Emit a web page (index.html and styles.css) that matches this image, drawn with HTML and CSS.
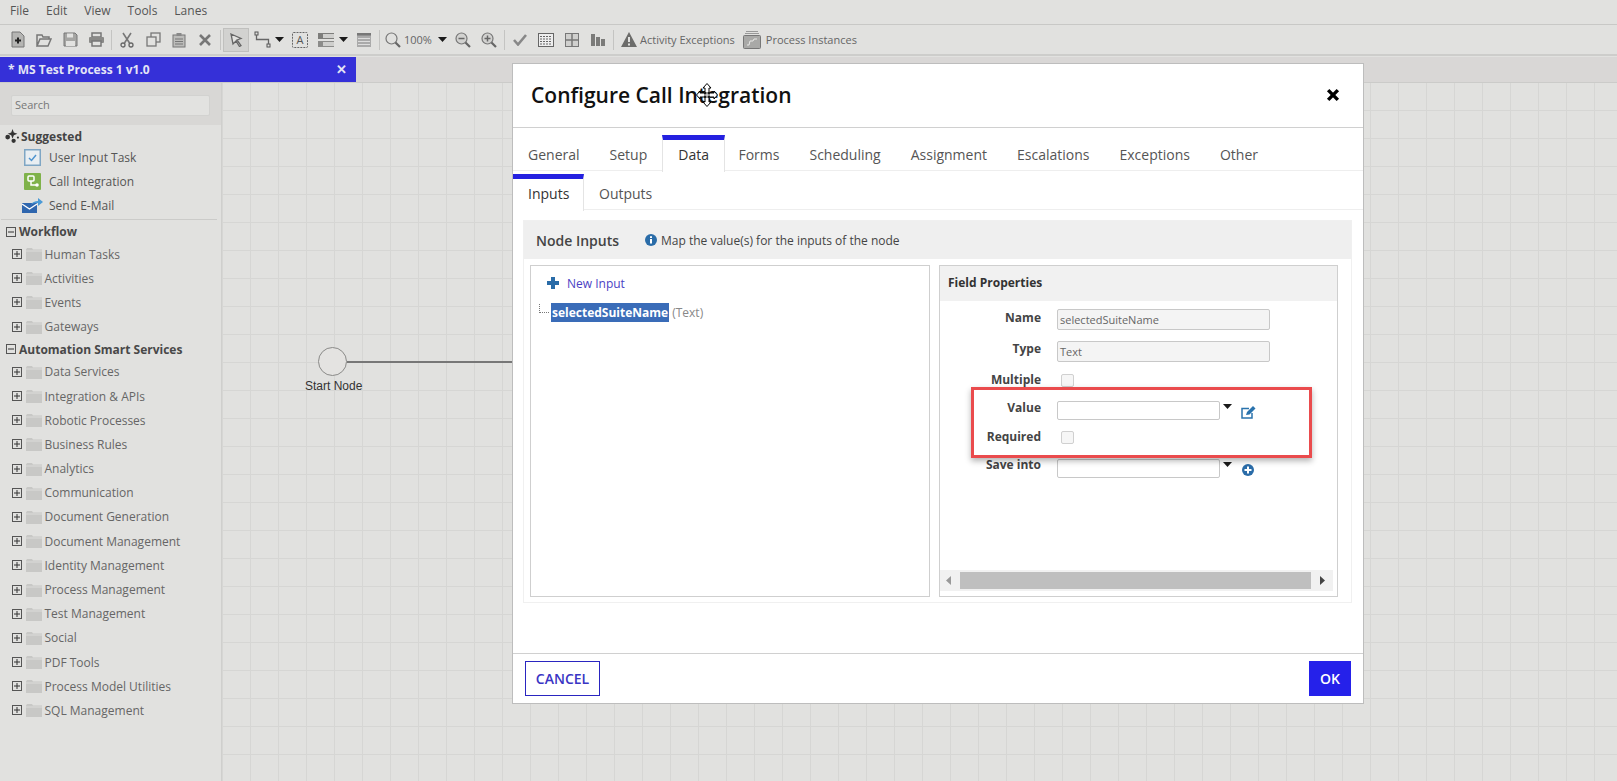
FILE: index.html
```html
<!DOCTYPE html>
<html lang="en">
<head>
<meta charset="utf-8">
<title>Configure Call Integration</title>
<link rel="stylesheet" href="styles.css">
</head>
<body>
<svg class="defs" width="0" height="0" aria-hidden="true">
  <symbol id="folder" viewBox="0 0 16 14"><path d="M0 2.500 1 1h5l1 1.500h9V14H0z" fill="#c8c8c6"/><path d="M0 4h16" stroke="#dcdcda"/></symbol>
  <symbol id="plus" viewBox="0 0 10 10"><rect x=".5" y=".5" width="9" height="9" fill="none" stroke="#555"/><path d="M2 5h6M5 2v6" stroke="#333"/></symbol>
  <symbol id="minus" viewBox="0 0 10 10"><rect x=".5" y=".5" width="9" height="9" fill="none" stroke="#555"/><path d="M2 5h6" stroke="#333"/></symbol>
  <symbol id="caret" viewBox="0 0 9 5"><path d="M0 0h9L4.500 5z" fill="#1a1a1a"/></symbol>
</svg>

<nav class="menubar"><span>File</span><span>Edit</span><span>View</span><span>Tools</span><span>Lanes</span></nav>

<div class="toolbar">
  <span class="cell"><svg width="14" height="17" viewBox="0 0 14 17"><path d="M1 1h8l4 4v11H1z" fill="#b5b5b3" stroke="#777"/><path d="M4 9.500h6M7 6.500v6" stroke="#222" stroke-width="2"/></svg></span>
  <span class="cell"><svg width="16" height="14" viewBox="0 0 16 14"><path d="M1 13V2h5l1 2h6v2M1 13l3-7h11l-3 7z" fill="none" stroke="#777" stroke-width="1.500"/></svg></span>
  <span class="cell"><svg width="15" height="15" viewBox="0 0 15 15"><path d="M1 1h11l2 2v11H1z" fill="#a5a5a3" stroke="#777"/><rect x="4" y="1.500" width="6" height="4" fill="#e2e2e0"/><rect x="3" y="9" width="9" height="5" fill="#e2e2e0"/></svg></span>
  <span class="cell"><svg width="17" height="15" viewBox="0 0 17 15"><rect x="4" y="1" width="9" height="4" fill="none" stroke="#777" stroke-width="1.500"/><rect x="1" y="5" width="15" height="6" rx="1" fill="#8a8a88"/><rect x="4" y="9" width="9" height="5" fill="#e2e2e0" stroke="#777" stroke-width="1.500"/></svg></span>
  <i class="sep"></i>
  <span class="cell"><svg width="14" height="16" viewBox="0 0 14 16"><path d="M3 1l6.500 10M11 1 4.500 11" stroke="#777" stroke-width="1.600" fill="none"/><circle cx="3" cy="13" r="2" fill="none" stroke="#666" stroke-width="1.300"/><circle cx="11" cy="13" r="2" fill="none" stroke="#666" stroke-width="1.300"/></svg></span>
  <span class="cell"><svg width="15" height="15" viewBox="0 0 15 15"><rect x="5" y="1" width="9" height="9" fill="none" stroke="#777" stroke-width="1.300"/><rect x="1" y="5" width="9" height="9" fill="#e2e2e0" stroke="#777" stroke-width="1.300"/></svg></span>
  <span class="cell"><svg width="14" height="16" viewBox="0 0 14 16"><rect x="1" y="3" width="12" height="12" fill="#bcbcba" stroke="#777"/><rect x="4.500" y="1" width="5" height="3" fill="#888"/><path d="M3 7h8M3 9.500h8M3 12h8" stroke="#777"/></svg></span>
  <span class="cell"><svg width="14" height="14" viewBox="0 0 14 14"><path d="M2 2l10 10M12 2 2 12" stroke="#777" stroke-width="2.600"/></svg></span>
  <i class="sep"></i>
  <span class="cell active"><svg width="13" height="14" viewBox="0 0 13 14"><path d="M1 1l10 4.500-4 1.500 4 5.500-1.500 1-3.500-5.500L3 11z" fill="#e2e2e0" stroke="#666" stroke-width="1.300"/></svg></span>
  <span class="cell"><svg width="17" height="17" viewBox="0 0 17 17"><rect x="1" y="1" width="3" height="3" fill="none" stroke="#555"/><rect x="13" y="13" width="3" height="3" fill="none" stroke="#555"/><path d="M2.500 4v4.500h12V13" fill="none" stroke="#666" stroke-width="1.300"/></svg></span>
  <svg class="caret" width="9" height="5"><use href="#caret"/></svg>
  <span class="cell cell-after-caret"><svg width="16" height="16" viewBox="0 0 16 16"><rect x=".5" y=".5" width="15" height="15" rx="1" fill="none" stroke="#666" stroke-dasharray="2 1"/><text x="8" y="12" class="svg-a">A</text></svg></span>
  <span class="cell"><svg width="16" height="14" viewBox="0 0 16 14"><rect width="16" height="6" fill="#7d7d7b"/><rect y="8" width="16" height="6" fill="#8c8c8a"/><rect x="5" y="1" width="11" height="4" fill="#cfcfcd"/><rect x="5" y="9" width="11" height="4" fill="#cfcfcd"/></svg></span>
  <svg class="caret" width="9" height="5"><use href="#caret"/></svg>
  <span class="cell cell-after-caret"><svg width="14" height="14" viewBox="0 0 14 14"><rect width="14" height="14" fill="#aaa"/><rect width="14" height="2.500" fill="#777"/><path d="M1 5.500h12M1 8.500h12M1 11.500h12" stroke="#ddd"/></svg></span>
  <i class="sep sep-tight"></i>
  <span class="cell"><svg width="16" height="16" viewBox="0 0 16 16"><circle cx="6.500" cy="6.500" r="5.500" fill="none" stroke="#777" stroke-width="1.200"/><path d="M10.500 10.500 15 15" stroke="#666" stroke-width="2.200"/></svg></span>
  <span class="zoom-val">100%</span>
  <svg class="caret" width="9" height="5"><use href="#caret"/></svg>
  <span class="cell cell-zoomout"><svg width="16" height="16" viewBox="0 0 16 16"><circle cx="6.500" cy="6.500" r="5.500" fill="#d2d2d0" stroke="#777" stroke-width="1.200"/><path d="M10.500 10.500 15 15" stroke="#666" stroke-width="2.200"/><path d="M3.500 6.500h6" stroke="#666" stroke-width="1.500"/></svg></span>
  <span class="cell"><svg width="16" height="16" viewBox="0 0 16 16"><circle cx="6.500" cy="6.500" r="5.500" fill="#d2d2d0" stroke="#777" stroke-width="1.200"/><path d="M10.500 10.500 15 15" stroke="#666" stroke-width="2.200"/><path d="M3.500 6.500h6M6.500 3.500v6" stroke="#666" stroke-width="1.500"/></svg></span>
  <i class="sep"></i>
  <span class="cell"><svg width="14" height="12" viewBox="0 0 14 12"><path d="M1 6l4 4.500L13 1" fill="none" stroke="#888" stroke-width="2.600"/></svg></span>
  <span class="cell"><svg width="16" height="14" viewBox="0 0 16 14"><rect x=".5" y=".5" width="15" height="13" fill="#eee" stroke="#666"/><path d="M2 3.500h12M2 6h12M2 8.500h12M2 11h12" stroke="#666" stroke-dasharray="2 1"/></svg></span>
  <span class="cell"><svg width="14" height="14" viewBox="0 0 14 14"><rect x=".5" y=".5" width="13" height="13" fill="#d0d0ce" stroke="#777"/><path d="M7 0v14M0 7h14" stroke="#777" stroke-width="1.500"/></svg></span>
  <span class="cell"><svg width="14" height="12" viewBox="0 0 14 12"><path d="M0 0h4v12H0zM5 3h4v9H5zM10 5h4v7h-4z" fill="#7b7b79"/></svg></span>
  <i class="sep"></i>
  <span class="labelled"><svg width="16" height="15" viewBox="0 0 16 15"><path d="M8 0 16 15H0z" fill="#6c6c6a"/><path d="M8 5v5M8 11.500v2" stroke="#e2e2e0" stroke-width="2"/></svg><span>Activity Exceptions</span></span>
  <span class="labelled labelled-second"><svg width="18" height="18" viewBox="0 0 18 18"><path d="M3 .5h12M2 2.500h14" stroke="#999"/><rect x=".5" y="4.500" width="17" height="13" rx="1" fill="#a9a9a7" stroke="#777"/><path d="M4 14h2l1-4h3l1-2h3" fill="none" stroke="#e8e8e6"/></svg><span>Process Instances</span></span>
</div>

<div class="tabstrip">
  <div class="doc-tab"><span>* MS Test Process 1 v1.0</span><span class="doc-x">✕</span></div>
</div>

<div class="workspace">
  <aside class="sidebar">
    <div class="search-wrap"><input class="search" placeholder="Search" aria-label="Search"></div>
    <div class="suggested-h">
      <svg width="14" height="14" viewBox="0 0 13 13"><path d="M7 0l1.200 3.300L11.500 4.500 8.200 5.700 7 9 5.800 5.700 2.500 4.500 5.800 3.300z" fill="#333"/><circle cx="2.500" cy="7.500" r="2.200" fill="#333"/><circle cx="8" cy="11" r="2" fill="#333"/><circle cx="12" cy="8" r="1" fill="#333"/></svg>
      <span>Suggested</span>
    </div>
    <div class="sug-item"><svg width="17" height="17" viewBox="0 0 17 17"><rect x=".75" y=".75" width="15.500" height="15.500" fill="#e9eef2" stroke="#7fa6c4" stroke-width="1.500"/><path d="M5 9l2.500 2.500L12 6" fill="none" stroke="#4f94cf" stroke-width="1.500"/></svg><span>User Input Task</span></div>
    <div class="sug-item"><svg width="17" height="17" viewBox="0 0 17 17"><rect width="17" height="17" rx="1" fill="#7fb24a"/><rect x="4" y="3" width="6" height="5" rx="1" fill="none" stroke="#fff" stroke-width="1.500"/><path d="M7 8v4h5" fill="none" stroke="#fff" stroke-width="1.500"/><circle cx="13" cy="12" r="1.800" fill="#fff"/></svg><span>Call Integration</span></div>
    <div class="sug-item"><svg width="21" height="15" viewBox="0 0 21 15"><rect y="5" width="15" height="10" fill="#2f66ae"/><path d="M0 6l7.500 5L15 6" fill="none" stroke="#fff" stroke-width="1.300"/><path d="M9 7c1-3 4-4 7-4V0l5 4-5 4V5c-3 0-5 0-7 2z" fill="#4b9ad6"/></svg><span>Send E-Mail</span></div>
    <hr class="side-rule">
    <div class="group"><svg width="10" height="10"><use href="#minus"/></svg><span>Workflow</span></div>
    <div class="node"><svg width="10" height="10"><use href="#plus"/></svg><svg width="16" height="14"><use href="#folder"/></svg><span>Human Tasks</span></div>
    <div class="node"><svg width="10" height="10"><use href="#plus"/></svg><svg width="16" height="14"><use href="#folder"/></svg><span>Activities</span></div>
    <div class="node"><svg width="10" height="10"><use href="#plus"/></svg><svg width="16" height="14"><use href="#folder"/></svg><span>Events</span></div>
    <div class="node"><svg width="10" height="10"><use href="#plus"/></svg><svg width="16" height="14"><use href="#folder"/></svg><span>Gateways</span></div>
    <div class="group"><svg width="10" height="10"><use href="#minus"/></svg><span>Automation Smart Services</span></div>
    <div class="node"><svg width="10" height="10"><use href="#plus"/></svg><svg width="16" height="14"><use href="#folder"/></svg><span>Data Services</span></div>
    <div class="node"><svg width="10" height="10"><use href="#plus"/></svg><svg width="16" height="14"><use href="#folder"/></svg><span>Integration &amp; APIs</span></div>
    <div class="node"><svg width="10" height="10"><use href="#plus"/></svg><svg width="16" height="14"><use href="#folder"/></svg><span>Robotic Processes</span></div>
    <div class="node"><svg width="10" height="10"><use href="#plus"/></svg><svg width="16" height="14"><use href="#folder"/></svg><span>Business Rules</span></div>
    <div class="node"><svg width="10" height="10"><use href="#plus"/></svg><svg width="16" height="14"><use href="#folder"/></svg><span>Analytics</span></div>
    <div class="node"><svg width="10" height="10"><use href="#plus"/></svg><svg width="16" height="14"><use href="#folder"/></svg><span>Communication</span></div>
    <div class="node"><svg width="10" height="10"><use href="#plus"/></svg><svg width="16" height="14"><use href="#folder"/></svg><span>Document Generation</span></div>
    <div class="node"><svg width="10" height="10"><use href="#plus"/></svg><svg width="16" height="14"><use href="#folder"/></svg><span>Document Management</span></div>
    <div class="node"><svg width="10" height="10"><use href="#plus"/></svg><svg width="16" height="14"><use href="#folder"/></svg><span>Identity Management</span></div>
    <div class="node"><svg width="10" height="10"><use href="#plus"/></svg><svg width="16" height="14"><use href="#folder"/></svg><span>Process Management</span></div>
    <div class="node"><svg width="10" height="10"><use href="#plus"/></svg><svg width="16" height="14"><use href="#folder"/></svg><span>Test Management</span></div>
    <div class="node"><svg width="10" height="10"><use href="#plus"/></svg><svg width="16" height="14"><use href="#folder"/></svg><span>Social</span></div>
    <div class="node"><svg width="10" height="10"><use href="#plus"/></svg><svg width="16" height="14"><use href="#folder"/></svg><span>PDF Tools</span></div>
    <div class="node"><svg width="10" height="10"><use href="#plus"/></svg><svg width="16" height="14"><use href="#folder"/></svg><span>Process Model Utilities</span></div>
    <div class="node"><svg width="10" height="10"><use href="#plus"/></svg><svg width="16" height="14"><use href="#folder"/></svg><span>SQL Management</span></div>
  </aside>
  <main class="canvas">
    <div class="start-circle"></div>
    <div class="start-line"></div>
    <div class="start-label">Start Node</div>
  </main>
</div>

<section class="modal" aria-label="Configure Call Integration">
  <header class="modal-head">
    <h1>Configure Call Integration</h1>
    <svg width="14" height="14" viewBox="0 0 13 13"><path d="M2 2l9 9M11 2l-9 9" stroke="#000" stroke-width="3.200"/></svg>
  </header>
  <div class="tabs">
    <span>General</span><span>Setup</span><span class="on">Data</span><span>Forms</span><span>Scheduling</span><span>Assignment</span><span>Escalations</span><span>Exceptions</span><span>Other</span>
  </div>
  <div class="tabs subtabs">
    <span class="on">Inputs</span><span>Outputs</span>
  </div>
  <div class="panel">
    <div class="panel-bar">
      <strong>Node Inputs</strong>
      <svg width="12" height="12" viewBox="0 0 12 12"><circle cx="6" cy="6" r="6" fill="#2a6ca8"/><path d="M6 5v4.500M6 2.300v1.700" stroke="#fff" stroke-width="2"/></svg>
      <span>Map the value(s) for the inputs of the node</span>
    </div>
    <div class="panes">
      <div class="pane pane-tree">
        <div class="new-input"><svg width="12" height="12" viewBox="0 0 12 12"><path d="M6 0v12M0 6h12" stroke="#2a6ca8" stroke-width="4"/></svg><span>New Input</span></div>
        <div class="tree-row"><i class="tree-elbow"></i><b>selectedSuiteName</b><span>(Text)</span></div>
      </div>
      <div class="pane pane-props">
        <div class="props-head">Field Properties</div>
        <div class="frow frow-name"><label>Name</label><div class="tf ro">selectedSuiteName</div></div>
        <div class="frow frow-type"><label>Type</label><div class="tf ro">Text</div></div>
        <div class="frow frow-multi"><label>Multiple</label><i class="chk"></i></div>
        <div class="frow frow-value"><label>Value</label><div class="tf sel"></div>
          <svg class="sel-caret" width="9" height="5"><use href="#caret"/></svg>
          <svg class="sel-act" width="15" height="13" viewBox="0 0 15 13"><path d="M11 7v5H1V2.500h7" fill="none" stroke="#2a73ad" stroke-width="1.500"/><path d="M5 9l1-3 6-6 2.500 2.500-6 6z" fill="#2a73ad"/></svg>
        </div>
        <div class="frow frow-req"><label>Required</label><i class="chk"></i></div>
        <div class="frow frow-save"><label>Save into</label><div class="tf sel"></div>
          <svg class="sel-caret" width="9" height="5"><use href="#caret"/></svg>
          <svg class="sel-act sel-plus" width="12" height="12" viewBox="0 0 12 12"><circle cx="6" cy="6" r="6" fill="#2a6ca8"/><path d="M2.500 6h7M6 2.500v7" stroke="#fff" stroke-width="2"/></svg>
        </div>
        <div class="hscroll">
          <svg width="5" height="9" viewBox="0 0 5 9"><path d="M5 0v9L0 4.500z" fill="#999"/></svg>
          <div class="thumb"></div>
          <svg width="5" height="9" viewBox="0 0 5 9"><path d="M0 0v9l5-4.500z" fill="#444"/></svg>
        </div>
      </div>
    </div>
  </div>
  <footer class="modal-foot">
    <button class="btn-cancel">CANCEL</button>
    <button class="btn-ok">OK</button>
  </footer>
</section>

<div class="highlight"></div>
<svg class="move-cursor" width="22" height="24" viewBox="0 0 22 24"><path d="M11 .5 15 5h-2v5h5V8l3.500 4-3.500 4v-2h-5v5h2l-4 4.500L7 19h2v-5H4v2L.5 12 4 8v2h5V5H7z" fill="#fff" stroke="#000"/><path d="M8 9h6v6H8z" fill="#1a1a1a"/><path d="M11 7v10M6 12h10" stroke="#fff"/></svg>
</body>
</html>
```
FILE: styles.css
```css
* { box-sizing: border-box; }
html, body { margin: 0; height: 781px; overflow: hidden; }
body {
  position: relative;
  display: flex;
  flex-direction: column;
  background: #e1e1df;
  color: #444;
  font-family: "Open Sans", "Liberation Sans", sans-serif;
  font-size: 12px;
}
.defs { position: absolute; }

/* top chrome */
.menubar {
  height: 25px;
  flex: none;
  display: flex;
  align-items: center;
  gap: 17px;
  padding: 0 0 3px 10px;
  border-bottom: 1px solid #c8c8c6;
  font-size: 12px;
  color: #555;
}
.toolbar {
  height: 31px;
  flex: none;
  display: flex;
  align-items: center;
  padding-left: 5px;
  border-bottom: 2px solid #cdcdcb;
}
.cell {
  width: 26px;
  height: 24px;
  flex: none;
  display: flex;
  align-items: center;
  justify-content: center;
}
.cell.active { background: #d2d2d0; border: 1px solid #c0c0be; }
.cell-after-caret { margin-left: 3px; }
.cell-zoomout { margin-left: 3px; }
.sep { width: 1px; height: 20px; background: #c4c4c2; margin: 0 2px; flex: none; }
.sep-tight { margin: 0 0 0 2px; }
.caret { flex: none; }
.svg-a { font-family: "Open Sans", sans-serif; font-size: 11px; fill: #555; text-anchor: middle; }
.zoom-val { width: 34px; margin-left: -2px; font-size: 11px; color: #666; flex: none; }
.labelled { display: flex; align-items: center; gap: 3px; margin-left: 5px; font-size: 11px; color: #666; }
.labelled-second { gap: 5px; margin-left: 8px; }

.tabstrip {
  height: 26px;
  flex: none;
  margin-top: 1px;
  background: #d9d7d6;
  border-bottom: 1px solid #cbcbc9;
}
.doc-tab {
  width: 356px;
  height: 25px;
  padding: 0 9px 0 8px;
  display: flex;
  align-items: center;
  justify-content: space-between;
  background: #3530d8;
  color: #e4e4f6;
  font-weight: 700;
  font-size: 12px;
}
.doc-x { font-size: 12.500px; }

/* workspace */
.workspace { flex: 1; display: flex; min-height: 0; }
.sidebar {
  width: 222px;
  flex: none;
  border-right: 1px solid #cfcfcd;
  color: #606060;
}
.search-wrap { height: 42px; padding: 12px 11px 0; background: #d8d7d5; }
.search {
  display: block;
  width: 199px;
  height: 21px;
  padding: 0 3px 2px;
  border: 1px solid #d2d2d0;
  border-radius: 2px;
  background: #e2e2e0;
  font: 11px "Open Sans", sans-serif;
}
.search::placeholder { color: #777; }
.suggested-h { height: 20px; display: flex; align-items: center; gap: 2px; padding: 2px 0 0 5px; font-weight: 700; color: #444; }
.sug-item { height: 24px; display: flex; align-items: center; padding-left: 22px; color: #555; }
.sug-item svg { width: 21px; margin-right: 6px; }
.side-rule { height: 1px; margin: 2px 4px 0 1px; border: 0; background: #cbcbc9; }
.group { height: 22px; display: flex; align-items: center; gap: 3px; padding: 1px 0 0 6px; font-weight: 700; color: #484848; }
.node + .group { margin-top: -1px; }
.node { height: 24.200px; display: flex; align-items: center; padding-left: 12px; gap: 3px; }
.node span { margin-left: -.5px; color: #666; }
.node svg:first-child { margin-right: 1px; }
.canvas {
  position: relative;
  flex: 1;
  background-color: #e1e1df;
  background-image:
    linear-gradient(#d6d6d4 1px, transparent 1px),
    linear-gradient(90deg, #d6d6d4 1px, transparent 1px);
  background-size: 28px 28px;
  background-position: 0 27px;
}
.start-circle { position: absolute; left: 96px; top: 264px; width: 29px; height: 29px; border: 1px solid #8a8a88; border-radius: 50%; background: #e4e3e1; }
.start-line { position: absolute; left: 125px; top: 278px; width: 171px; height: 2px; background: #777; }
.start-label { position: absolute; left: 83px; top: 296px; width: 56px; text-align: center; white-space: nowrap; font: 12px "Liberation Sans", sans-serif; color: #333; }

/* modal */
.modal {
  position: absolute;
  left: 512px;
  top: 63px;
  width: 852px;
  height: 641px;
  display: flex;
  flex-direction: column;
  background: #fff;
  border: 1px solid #bdbdbd;
}
.modal-head {
  height: 64px;
  flex: none;
  display: flex;
  align-items: center;
  justify-content: space-between;
  padding: 0 23px 2px 18px;
  border-bottom: 1px solid #d0d0d0;
}
.modal-head h1 { margin: 0; font-size: 21px; font-weight: 600; color: #111; }
.tabs { height: 36px; flex: none; margin-top: 7px; display: flex; border-bottom: 1px solid #eee; font-size: 14px; color: #555; }
.tabs span { padding: 10px 15px 0; }
.tabs .on { border: solid #e4e4e4; border-width: 0 1px; border-top: 5px solid #2420e0; background: #fff; height: 37px; padding: 5px 15px 0; margin-right: -1.500px; color: #333; }
.subtabs { margin-top: 3px; }
.subtabs .on { width: 71px; border-left: 0; margin-right: 0; }
.panel { height: 383px; flex: none; margin: 10px 11px 0 10px; border: 1px solid #f0f0f0; }
.panel-bar { height: 38px; display: flex; align-items: center; background: #efefef; padding-left: 12px; color: #444; }
.panel-bar strong { width: 109px; font-size: 14px; font-weight: 600; }
.panel-bar svg { margin-right: 4px; }
.panes { display: flex; gap: 9px; padding: 6px 0 0 6px; }
.pane { height: 332px; flex: none; border: 1px solid #cfcfcf; }
.pane-tree { width: 400px; padding: 7px 0 0 16px; }
.pane-props { width: 399px; display: flex; flex-direction: column; }
.new-input { height: 20px; display: flex; align-items: center; gap: 8px; color: #4b3fc4; }
.tree-row { margin: 9px 0 0 -8px; height: 20px; display: flex; align-items: center; color: #888; }
.tree-elbow { width: 10px; height: 9px; margin: -8px 2px 0 0; border-left: 1px dotted #777; border-bottom: 1px dotted #777; }
.tree-row b { height: 19px; line-height: 19px; padding: 0 1px; margin-right: 3px; background: #3a6cb8; color: #fff; font-weight: 700; font-size: 12px; }
.props-head { height: 35px; flex: none; padding: 0 8px; background: #f1f1f1; line-height: 34px; font-weight: 700; color: #333; }
.frow { display: flex; flex: none; }
.frow label { width: 101px; margin-right: 16px; text-align: right; font-weight: 700; color: #444; line-height: 16px; }
.tf { height: 21px; border: 1px solid #c8c8c8; border-radius: 2px; font-size: 11px; line-height: 20px; padding-left: 2px; color: #666; }
.tf.ro { width: 213px; background: #f4f4f4; }
.tf.sel { width: 163px; height: 19px; background: #fff; }
.chk { width: 13px; height: 13px; margin-left: 4px; border: 1px solid #d0d0d0; border-radius: 2px; background: #f6f6f6; }
.sel-caret { margin: 3px 0 0 3px; }
.sel-act { margin: 5px 0 0 9px; }
.sel-plus { margin-left: 10px; }
.frow-name { margin-top: 8px; }
.frow-name label { margin-top: 1px; }
.frow-type { margin-top: 11px; }
.frow-multi { margin-top: 12px; }
.frow-multi label { margin-top: -2px; }
.frow-value { margin-top: 13px; }
.frow-value label { margin-top: -1px; }
.frow-req { margin-top: 11px; }
.frow-req label { margin-top: -2px; }
.frow-save { margin-top: 14px; }
.frow-save label { margin-top: -2px; }
.hscroll { margin: auto 4px 5px 0; height: 21px; flex: none; display: flex; align-items: center; justify-content: space-between; padding: 0 8px 0 6px; background: #f1f1f1; }
.thumb { width: 351px; height: 17px; background: #bfbfbf; }
.modal-foot {
  margin-top: auto;
  height: 50px;
  display: flex;
  justify-content: space-between;
  padding: 7px 12px 0;
  border-top: 1px solid #d0d0d0;
}
.btn-cancel, .btn-ok { height: 35px; padding: 0; border-radius: 0; font: 600 14px "Open Sans", sans-serif; }
.btn-cancel { width: 75px; border: 1px solid #2a25c0; background: #fff; color: #3a35c4; }
.btn-ok { width: 42px; border: 0; background: #2521ea; color: #fff; }

/* overlays */
.highlight {
  position: absolute;
  left: 971px;
  top: 387px;
  width: 341px;
  height: 71px;
  border: 3px solid #ea4b4d;
  box-shadow: 0 3px 6px rgba(0, 0, 0, .3);
}
.move-cursor { position: absolute; left: 696px; top: 83px; }
```
